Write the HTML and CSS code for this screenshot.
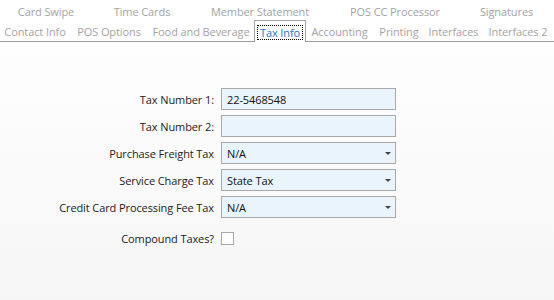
FILE: index.html
```html
<!DOCTYPE html>
<html>
<head>
<meta charset="utf-8">
<link rel="stylesheet" href="styles.css">
</head>
<body>
<div class="tabs">
  <div class="tab-row top">
    <span class="tab w92">Card Swipe</span>
    <span class="tab w100">Time Cards</span>
    <span class="tab w136">Member Statement</span>
    <span class="tab w134">POS CC Processor</span>
    <span class="tab w89">Signatures</span>
  </div>
  <div class="tab-row bottom">
    <span class="tab w70">Contact Info</span>
    <span class="tab w78">POS Options</span>
    <span class="tab w106">Food and Beverage</span>
    <span class="tab selected w52"><span class="focus">Tax Info</span></span>
    <span class="tab w67">Accounting</span>
    <span class="tab w52b">Printing</span>
    <span class="tab w57">Interfaces</span>
    <span class="tab w72">Interfaces 2</span>
  </div>
</div>
<div class="content">
  <div class="form">
    <label class="lbl">Tax Number 1:</label>
    <div class="field">22-5468548</div>
    <label class="lbl">Tax Number 2:</label>
    <div class="field"></div>
    <label class="lbl">Purchase Freight Tax</label>
    <div class="field select"><span>N/A</span><i class="arrow"></i></div>
    <label class="lbl">Service Charge Tax</label>
    <div class="field select"><span>State Tax</span><i class="arrow"></i></div>
    <label class="lbl">Credit Card Processing Fee Tax</label>
    <div class="field select"><span>N/A</span><i class="arrow"></i></div>
    <label class="lbl check-lbl">Compound Taxes?</label>
    <div class="check-cell"><span class="checkbox"></span></div>
  </div>
</div>
</body>
</html>
```
FILE: styles.css
```css
html, body {
  margin: 0;
  padding: 0;
}
body {
  width: 554px;
  height: 300px;
  overflow: hidden;
  font-family: "Open Sans", "Noto Sans", sans-serif;
  font-size: 11px;
  letter-spacing: -0.1px;
  color: #1a1a1a;
  background: #f7f7f7;
}
.tabs {
  background: #ffffff;
  border-bottom: 1px solid #a0a0a0;
  height: 41px;
}
.tab-row {
  display: flex;
  height: 20px;
}
.bottom {
  height: 21px;
}
.tab {
  display: flex;
  align-items: center;
  justify-content: center;
  color: #a3a3a3;
  white-space: nowrap;
  box-sizing: border-box;
  flex: none;
}
.top .tab {
  padding-top: 3px;
}
.bottom .tab {
  padding-top: 2px;
}
.w92 { width: 92px; }
.w100 { width: 100px; }
.w136 { width: 136px; }
.w134 { width: 134px; }
.w89 { width: 89px; }
.w70 { width: 70px; }
.w78 { width: 78px; }
.w106 { width: 106px; }
.w52 { width: 52px; }
.w67 { width: 67px; }
.w52b { width: 52px; }
.w57 { width: 57px; }
.w72 { width: 72px; }

.tab.selected {
  color: #1f74d6;
  background: #ffffff;
  border: 1px solid #a0a0a0;
  border-bottom: none;
  height: 22px;
  padding-top: 1px;
}
.focus {
  border: 1px dotted #000;
  padding: 0 2px;
  line-height: 13px;
}

.content {
  height: 258px;
  background: linear-gradient(#fefefe, #f6f6f6);
  padding-top: 46px;
  box-sizing: border-box;
}
.form {
  display: grid;
  grid-template-columns: 214px 175px;
  grid-auto-rows: 22px;
  column-gap: 7px;
  row-gap: 5px;
}
.lbl {
  display: flex;
  align-items: center;
  justify-content: flex-end;
  white-space: nowrap;
  color: #222;
}
.field {
  box-sizing: border-box;
  border: 1px solid #a9a9a9;
  background: #e9f4fc;
  display: flex;
  align-items: center;
  padding: 0 5px;
  color: #111;
}
.select {
  justify-content: space-between;
}
.arrow {
  width: 0;
  height: 0;
  border-left: 3px solid transparent;
  border-right: 3px solid transparent;
  border-top: 3px solid #444;
  margin-right: -1px;
}
.check-lbl {
  margin-top: 9px;
}
.check-cell {
  display: flex;
  align-items: center;
  margin-top: 9px;
}
.checkbox {
  width: 13px;
  height: 13px;
  box-sizing: border-box;
  border: 1px solid #a9a9a9;
  background: #fff;
}
```
